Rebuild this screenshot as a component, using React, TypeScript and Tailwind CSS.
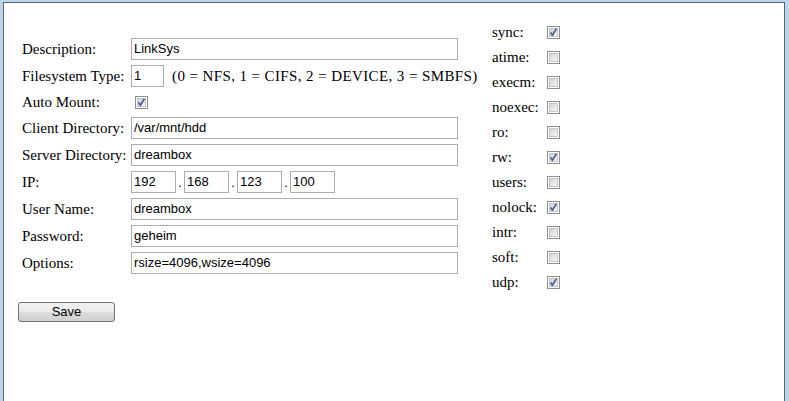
import React from "react";

const serif = { fontFamily: '"Liberation Serif", "Times New Roman", serif' };

function Check({ checked = false }: { checked?: boolean }) {
  return (
    <svg width="13" height="13" viewBox="0 0 13 13" className="block shrink-0">
      <defs>
        <linearGradient id="cbg" x1="0" y1="0" x2="1" y2="1">
          <stop offset="0" stopColor="#cdd1d6" />
          <stop offset="1" stopColor="#f8f8f8" />
        </linearGradient>
      </defs>
      <rect x="0.5" y="0.5" width="12" height="12" fill="#ffffff" stroke="#8e8f8f" />
      <rect x="2.5" y="2.5" width="8" height="8" fill="url(#cbg)" stroke="#c2c6cb" />
      {checked && (
        <path d="M3.6 6.4 L5.4 9.2 L9.4 2.6" fill="none" stroke="#4a5d99" strokeWidth="1.7" strokeLinejoin="round" />
      )}
    </svg>
  );
}

function TextInput({ value, w }: { value: string; w: string }) {
  return (
    <div
      className={`${w} h-[22px] border border-[#abadb3] bg-white pl-[2px] text-[13px] leading-[20px] text-black overflow-hidden whitespace-nowrap`}
      style={{ fontFamily: '"Liberation Sans", Arial, sans-serif' }}
    >
      {value}
    </div>
  );
}

function Row({ label, children, h = "h-[27px]" }: { label: string; children: React.ReactNode; h?: string }) {
  return (
    <div className={`flex items-start ${h}`}>
      <div className="w-[113px] shrink-0 pl-[4px] mt-[2px] leading-[22px] text-[15px] text-black whitespace-nowrap" style={serif}>
        {label}
      </div>
      <div className="mt-[2px] flex items-start">{children}</div>
    </div>
  );
}

function Dot() {
  return (
    <div
      className="w-[8px] h-[22px] flex items-end justify-center text-[13px] leading-[20px] text-black"
      style={{ fontFamily: '"Liberation Sans", Arial, sans-serif' }}
    >
      .
    </div>
  );
}

const opts: [string, boolean][] = [
  ["sync:", true],
  ["atime:", false],
  ["execm:", false],
  ["noexec:", false],
  ["ro:", false],
  ["rw:", true],
  ["users:", false],
  ["nolock:", true],
  ["intr:", false],
  ["soft:", false],
  ["udp:", true],
];

export default function App() {
  return (
    <div className="w-[789px] h-[401px] bg-[#bed3ec] pl-[3px] pt-[2px] pr-[4px] overflow-hidden">
      <div className="h-full bg-white border-l border-t border-r border-[#5d6670]">
        <div className="pl-[14px] pt-[17px]">
          <div className="flex items-start">
            <div className="w-[474px] shrink-0 pt-[16px]">
              <Row label="Description:">
                <TextInput value="LinkSys" w="w-[327px]" />
              </Row>
              <Row label="Filesystem Type:">
                <TextInput value="1" w="w-[33px]" />
                <div className="ml-[8px] leading-[22px] text-[15px] text-black whitespace-nowrap tracking-[0.4px]" style={serif}>
                  (0 = NFS, 1 = CIFS, 2 = DEVICE, 3 = SMBFS)
                </div>
              </Row>
              <div className="flex items-start h-[25px]">
                <div className="w-[113px] shrink-0 pl-[4px] mt-[1px] leading-[22px] text-[15px] text-black" style={serif}>
                  Auto Mount:
                </div>
                <div className="mt-[6px] ml-[4px]">
                  <Check checked />
                </div>
              </div>
              <Row label="Client Directory:">
                <TextInput value="/var/mnt/hdd" w="w-[327px]" />
              </Row>
              <Row label="Server Directory:">
                <TextInput value="dreambox" w="w-[327px]" />
              </Row>
              <Row label="IP:">
                <TextInput value="192" w="w-[45px]" />
                <Dot />
                <TextInput value="168" w="w-[45px]" />
                <Dot />
                <TextInput value="123" w="w-[45px]" />
                <Dot />
                <TextInput value="100" w="w-[45px]" />
              </Row>
              <Row label="User Name:">
                <TextInput value="dreambox" w="w-[327px]" />
              </Row>
              <Row label="Password:">
                <TextInput value="geheim" w="w-[327px]" />
              </Row>
              <Row label="Options:">
                <TextInput value="rsize=4096,wsize=4096" w="w-[327px]" />
              </Row>
            </div>
            <div className="flex flex-col">
              {opts.map(([name, on]) => (
                <div key={name} className="flex items-center h-[25px]">
                  <div className="w-[55px] text-[15px] leading-[25px] text-black" style={serif}>
                    {name}
                  </div>
                  <Check checked={on} />
                </div>
              ))}
            </div>
          </div>
          <button
            className="mt-[7px] w-[97px] h-[20px] rounded-[3px] border border-[#707070] bg-[linear-gradient(#f2f2f2_0%,#ebebeb_50%,#dddddd_51%,#cfcfcf_100%)] text-[13px] leading-[18px] text-black block"
            style={{ fontFamily: '"Liberation Sans", Arial, sans-serif' }}
          >
            Save
          </button>
        </div>
      </div>
    </div>
  );
}
